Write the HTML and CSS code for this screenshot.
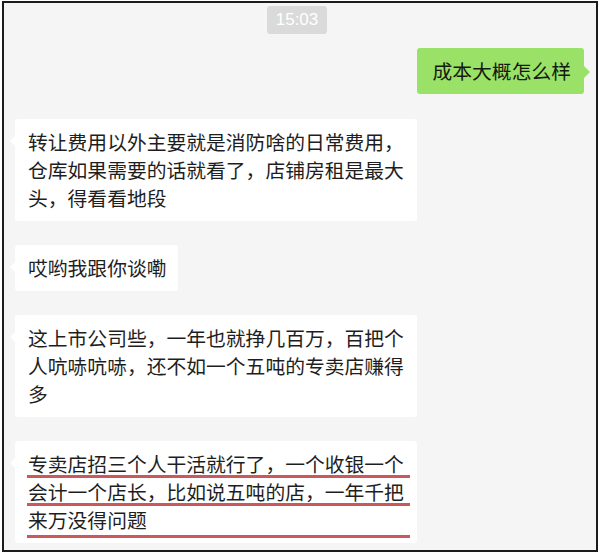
FILE: index.html
```html
<!DOCTYPE html>
<html lang="zh-CN">
<head>
<meta charset="utf-8">
<title>聊天记录</title>
<link rel="stylesheet" href="styles.css">
</head>
<body>
<div class="frame">
  <div class="chat">
    <div class="time">15:03</div>
    <div class="bubble out">成本大概怎么样</div>
    <div class="bubble in">转让费用以外主要就是消防啥的日常费用，仓库如果需要的话就看了，店铺房租是最大头，得看看地段</div>
    <div class="bubble in">哎哟我跟你谈嘞</div>
    <div class="bubble in">这上市公司些，一年也就挣几百万，百把个人吭哧吭哧，还不如一个五吨的专卖店赚得多</div>
    <div class="bubble in marked">专卖店招三个人干活就行了，一个收银一个会计一个店长，比如说五吨的店，一年千把来万没得问题<span class="mark m1"></span><span class="mark m2"></span><span class="mark m3"></span></div>
  </div>
</div>
</body>
</html>
```
FILE: styles.css
```css
html, body {
  margin: 0;
  padding: 0;
  background: #ffffff;
}

.frame {
  box-sizing: border-box;
  width: 596px;
  height: 551px;
  margin: 1px 0 0 2px;
  border: 2px solid #1c1c1c;
  background: #f5f5f5;
  overflow: hidden;
}

.chat {
  display: flex;
  flex-direction: column;
  align-items: flex-start;
  padding: 3px 12px 0 11px;
  font-family: "Noto Sans CJK SC", "Noto Sans", sans-serif;
  font-size: 19.8px;
  color: #1e1e1e;
}

.time {
  align-self: center;
  margin-left: -5px;
  height: 28px;
  line-height: 28px;
  padding: 0 9px;
  border-radius: 3px;
  background: #dadada;
  color: #ffffff;
  font-family: "Liberation Sans", Arial, sans-serif;
  font-size: 17px;
}

.bubble {
  position: relative;
  box-sizing: border-box;
  max-width: 402px;
  padding: 9px 12px 9px 13px;
  line-height: 28px;
  border-radius: 3px;
  background: #ffffff;
}

.bubble.in {
  margin-top: 24px;
}

.bubble.in::before {
  content: "";
  position: absolute;
  left: -5px;
  top: 17px;
  border-top: 5px solid transparent;
  border-bottom: 5px solid transparent;
  border-right: 5px solid #ffffff;
}

.bubble.out {
  align-self: flex-end;
  margin-top: 14px;
  margin-bottom: 1px;
  padding: 9px 13px 9px 16px;
  background: #9ae267;
  color: #151a12;
}

.bubble.out::after {
  content: "";
  position: absolute;
  right: -6px;
  top: 18px;
  border-top: 6px solid transparent;
  border-bottom: 6px solid transparent;
  border-left: 6px solid #9ae267;
}

.mark {
  position: absolute;
  left: 12px;
  width: 383px;
  height: 3px;
  background: #c4474c;
  opacity: 0.9;
}

.m1 { top: 34px; }
.m2 { top: 62px; }
.m3 { top: 94px; }
```
